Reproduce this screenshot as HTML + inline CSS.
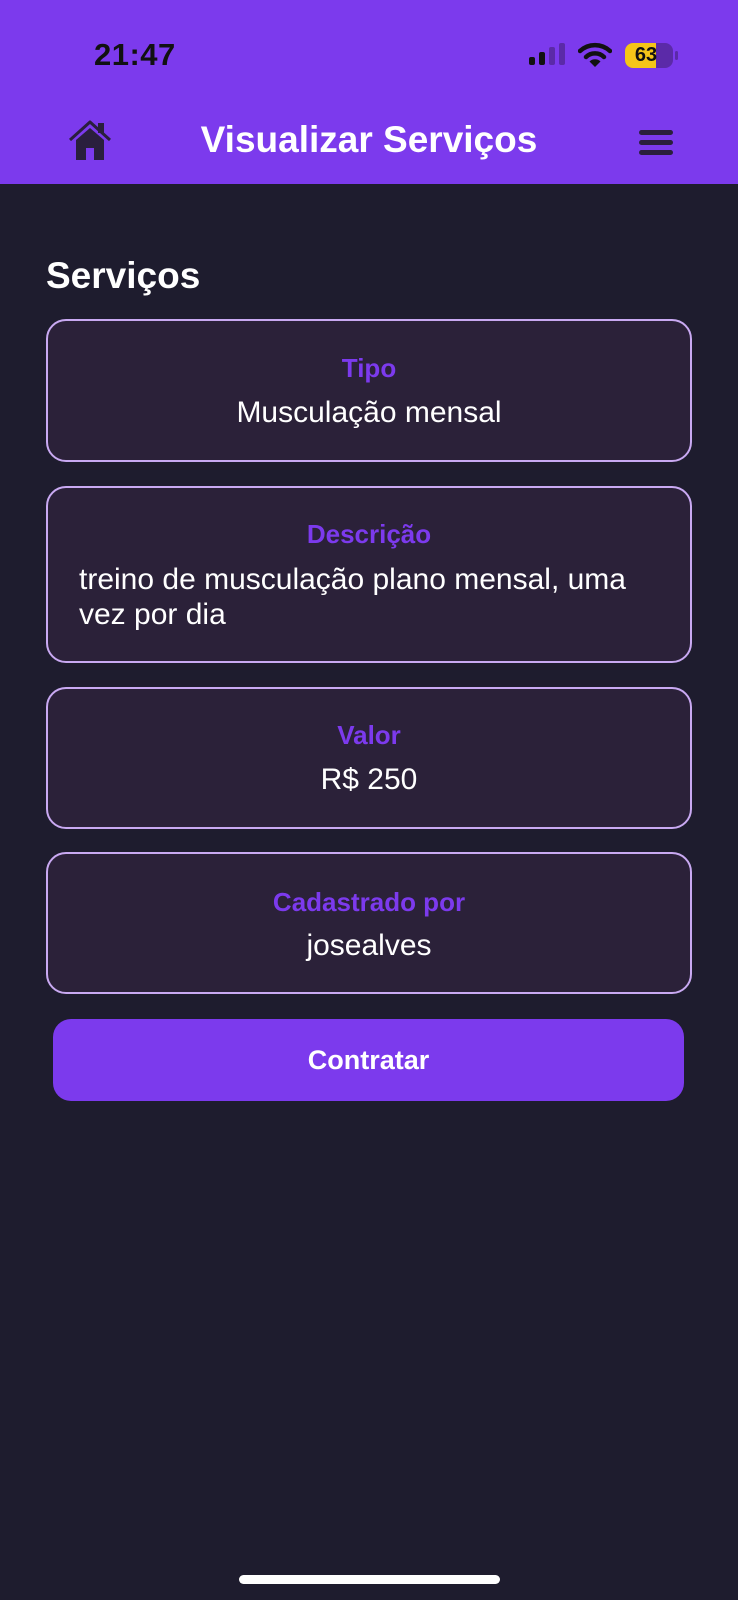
<!DOCTYPE html>
<html><head><meta charset="utf-8"><style>
*{margin:0;padding:0;box-sizing:border-box}
body{width:738px;height:1600px;background:#1e1c2e;font-family:"Liberation Sans",sans-serif;position:relative;overflow:hidden}
.hdr{position:absolute;left:0;top:0;width:738px;height:184px;background:#7c3aed}
.time{position:absolute;left:94px;top:37px;font-size:31px;font-weight:bold;color:#111;letter-spacing:0.5px}
.title{position:absolute;left:0;width:738px;text-align:center;top:119px;font-size:37px;font-weight:bold;color:#fff}
.h2{position:absolute;left:46px;top:255px;font-size:37px;font-weight:bold;color:#fff}
.card{position:absolute;left:46px;width:646px;background:#2b2139;border:2px solid #c9a9f2;border-radius:20px}
.lbl{position:absolute;left:0;width:100%;text-align:center;font-size:26px;font-weight:bold;color:#7c3aed}
.val{position:absolute;left:0;width:100%;text-align:center;font-size:30px;color:#fff}
.btn{position:absolute;left:53px;top:1019px;width:631px;height:82px;background:#7c3aed;border-radius:18px;color:#fff;font-size:27px;font-weight:bold;text-align:center;line-height:82px}
.ind{position:absolute;left:239px;top:1575px;width:261px;height:9px;background:#fff;border-radius:5px}
</style></head><body>
<div class="hdr">
<div class="time">21:47</div>
<svg style="position:absolute;left:528px;top:43px" width="40" height="24"><rect x="1" y="14" width="6" height="8" rx="2" fill="#111"/><rect x="11" y="9" width="6" height="13" rx="2" fill="#111"/><rect x="21" y="4" width="6" height="18" rx="2" fill="#5b2aa8"/><rect x="31" y="0" width="6" height="22" rx="2" fill="#5b2aa8"/></svg>
<svg style="position:absolute;left:578px;top:42px" width="34" height="26" viewBox="0 0 34 26"><path d="M2 9 A22 22 0 0 1 32 9" stroke="#111" stroke-width="4.5" fill="none" stroke-linecap="round"/><path d="M8 15 A13 13 0 0 1 26 15" stroke="#111" stroke-width="4.5" fill="none" stroke-linecap="round"/><path d="M17 25 L11.5 19.5 A8 8 0 0 1 22.5 19.5 Z" fill="#111"/></svg>
<div style="position:absolute;left:625px;top:43px;width:48px;height:25px;border-radius:8px;background:#5b2aa8;overflow:hidden"><div style="width:31px;height:100%;background:#f5c518"></div><div style="position:absolute;left:0;top:0;width:42px;text-align:center;font-size:20px;font-weight:bold;line-height:25px;color:#111">63</div></div>
<div style="position:absolute;left:675px;top:51px;width:3px;height:9px;background:#5b2aa8;border-radius:2px"></div>
<svg style="position:absolute;left:68px;top:120px" width="44" height="42" viewBox="0 0 44 42"><path d="M2 20 L22 2 L42 20" stroke="#2a1f3d" stroke-width="3" fill="none" stroke-linejoin="round"/><rect x="30" y="3" width="6" height="10" fill="#2a1f3d"/><path d="M8 20 L22 8 L36 20 L36 40 L26 40 L26 28 L18 28 L18 40 L8 40 Z" fill="#2a1f3d"/></svg>
<div class="title">Visualizar Serviços</div>
<svg style="position:absolute;left:638px;top:130px" width="36" height="26"><rect x="1" y="0" width="34" height="5" rx="2.5" fill="#2a1f3d"/><rect x="1" y="10" width="34" height="5" rx="2.5" fill="#2a1f3d"/><rect x="1" y="20" width="34" height="5" rx="2.5" fill="#2a1f3d"/></svg>
</div>
<div class="h2">Serviços</div>
<div class="card" style="top:319px;height:143px"><div class="lbl" style="top:32px">Tipo</div><div class="val" style="top:75px">Musculação mensal</div></div>
<div class="card" style="top:486px;height:177px"><div class="lbl" style="top:31px">Descrição</div><div style="position:absolute;left:31px;right:40px;top:74px;font-size:30px;color:#fff;line-height:35px">treino de musculação plano mensal, uma vez por dia</div></div>
<div class="card" style="top:687px;height:142px"><div class="lbl" style="top:31px">Valor</div><div class="val" style="top:74px">R$ 250</div></div>
<div class="card" style="top:852px;height:142px"><div class="lbl" style="top:33px">Cadastrado por</div><div class="val" style="top:75px">josealves</div></div>
<div class="btn">Contratar</div>
<div class="ind"></div>
</body></html>
